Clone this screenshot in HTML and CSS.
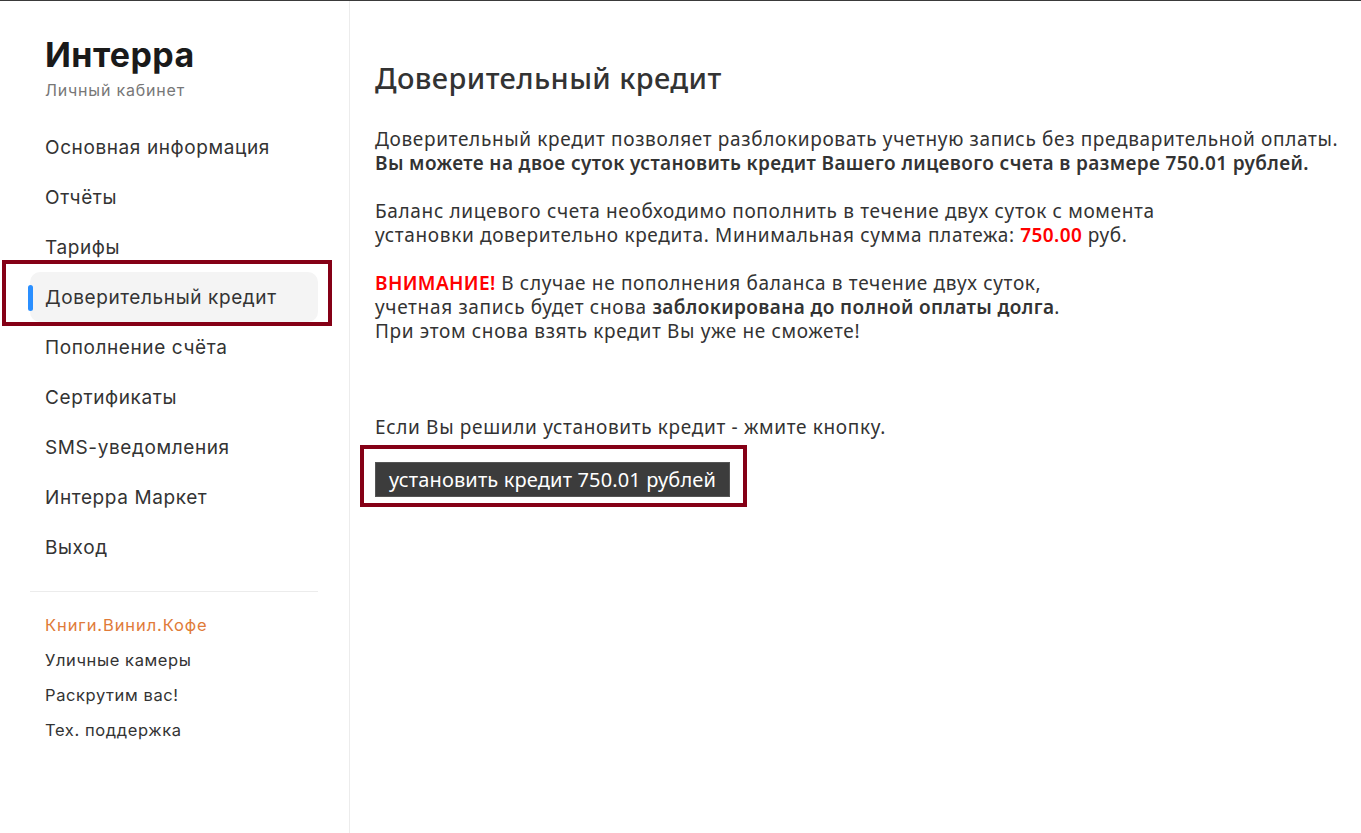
FILE: index.html
```html
<!DOCTYPE html>
<html lang="ru">
<head>
<meta charset="utf-8">
<title>Интерра — Доверительный кредит</title>
<link rel="stylesheet" href="styles.css">
</head>
<body>
<div class="page">
  <aside class="sidebar">
    <div class="brand">
      <div class="brand-name">Интерра</div>
      <div class="brand-sub">Личный кабинет</div>
    </div>
    <nav class="nav">
      <a class="nav-item">Основная информация</a>
      <a class="nav-item">Отчёты</a>
      <a class="nav-item">Тарифы</a>
      <a class="nav-item active">Доверительный кредит<span class="mark-box mark-nav"></span></a>
      <a class="nav-item">Пополнение счёта</a>
      <a class="nav-item">Сертификаты</a>
      <a class="nav-item">SMS-уведомления</a>
      <a class="nav-item">Интерра Маркет</a>
      <a class="nav-item">Выход</a>
    </nav>
    <div class="divider"></div>
    <div class="extra">
      <a class="extra-item orange">Книги.Винил.Кофе</a>
      <a class="extra-item">Уличные камеры</a>
      <a class="extra-item">Раскрутим вас!</a>
      <a class="extra-item">Тех. поддержка</a>
    </div>
  </aside>
  <main class="main">
    <h1 class="title">Доверительный кредит</h1>
    <p class="para">Доверительный кредит позволяет разблокировать учетную запись без предварительной оплаты.<br><b>Вы можете на двое суток установить кредит Вашего лицевого счета в размере 750.01 рублей.</b></p>
    <p class="para">Баланс лицевого счета необходимо пополнить в течение двух суток с момента<br>установки доверительно кредита. Минимальная сумма платежа: <b class="red">750.00</b> руб.</p>
    <p class="para"><b class="red">ВНИМАНИЕ!</b> В случае не пополнения баланса в течение двух суток,<br>учетная запись будет снова <b>заблокирована до полной оплаты долга</b>.<br>При этом снова взять кредит Вы уже не сможете!</p>
    <p class="para prompt">Если Вы решили установить кредит - жмите кнопку.</p>
    <div class="btn-wrap">
      <button class="btn">установить кредит 750.01 рублей</button>
      <span class="mark-box mark-btn"></span>
    </div>
  </main>
</div>
</body>
</html>
```
FILE: styles.css
```css
* { box-sizing: border-box; }
html, body { margin: 0; padding: 0; background: #fff; }
body {
  font-family: Inter, "Noto Sans", sans-serif;
  color: #333;
  border-top: 1px solid #3a3a3a;
}
.page {
  display: flex;
  min-height: 832px;
}
.sidebar {
  width: 350px;
  flex: 0 0 350px;
  border-right: 1px solid #ececec;
  padding: 0 31px 0 30px;
}
.brand { padding: 34px 0 0 15px; }
.brand-name {
  font-size: 34px;
  font-weight: 700;
  color: #1a1a1a;
  line-height: 40px;
  letter-spacing: 0.4px;
}
.brand-sub {
  font-size: 16px;
  color: #777;
  line-height: 22px;
  margin-top: 4px;
  letter-spacing: 0.8px;
}
.nav {
  display: flex;
  flex-direction: column;
  margin-top: 21px;
}
.nav-item {
  position: relative;
  display: flex;
  align-items: center;
  height: 50px;
  padding-left: 15px;
  font-size: 19px;
  color: #333;
  border-radius: 10px;
  letter-spacing: 0.6px;
}
.nav-item.active { background: #f4f4f4; }
.nav-item.active::before {
  content: "";
  position: absolute;
  left: -2px;
  top: 13px;
  width: 5px;
  height: 26px;
  border-radius: 3px;
  background: #2a8fff;
}
.divider {
  height: 1px;
  background: #ececec;
  margin-top: 19px;
}
.extra {
  display: flex;
  flex-direction: column;
  padding: 16px 0 0 15px;
}
.extra-item {
  font-size: 16.5px;
  line-height: 35px;
  color: #333;
  letter-spacing: 0.6px;
}
.extra-item.orange { color: #e07b39; letter-spacing: 0.9px; }

.main {
  flex: 1;
  padding: 57px 0 0 25px;
  font-family: "Noto Sans", sans-serif;
}
.title {
  margin: 0 0 29px;
  font-size: 29px;
  font-weight: 500;
  line-height: 40px;
  color: #333;
  letter-spacing: 0.4px;
}
.para {
  margin: 0 0 24px;
  font-size: 19px;
  line-height: 24px;
  color: #333;
  letter-spacing: 0.66px;
}
.para b { font-weight: 600; letter-spacing: 0.38px; }
.red { color: #f00; }
.prompt { margin-top: 72px; margin-bottom: 23px; }
.btn-wrap {
  position: relative;
  display: inline-block;
  vertical-align: top;
}
.btn {
  display: block;
  font-family: "Noto Sans", sans-serif;
  font-size: 20px;
  color: #fff;
  background: #3c3c3c;
  border: 1px solid #555;
  height: 35px;
  padding: 0 13px;
  line-height: 33px;
  letter-spacing: 0.15px;
}
.mark-box {
  position: absolute;
  border: 4px solid #850016;
  pointer-events: none;
}
.mark-nav {
  left: -28px;
  top: -12px;
  width: 330px;
  height: 66px;
}
.mark-btn {
  left: -15px;
  top: -17px;
  width: 387px;
  height: 62px;
}
```
